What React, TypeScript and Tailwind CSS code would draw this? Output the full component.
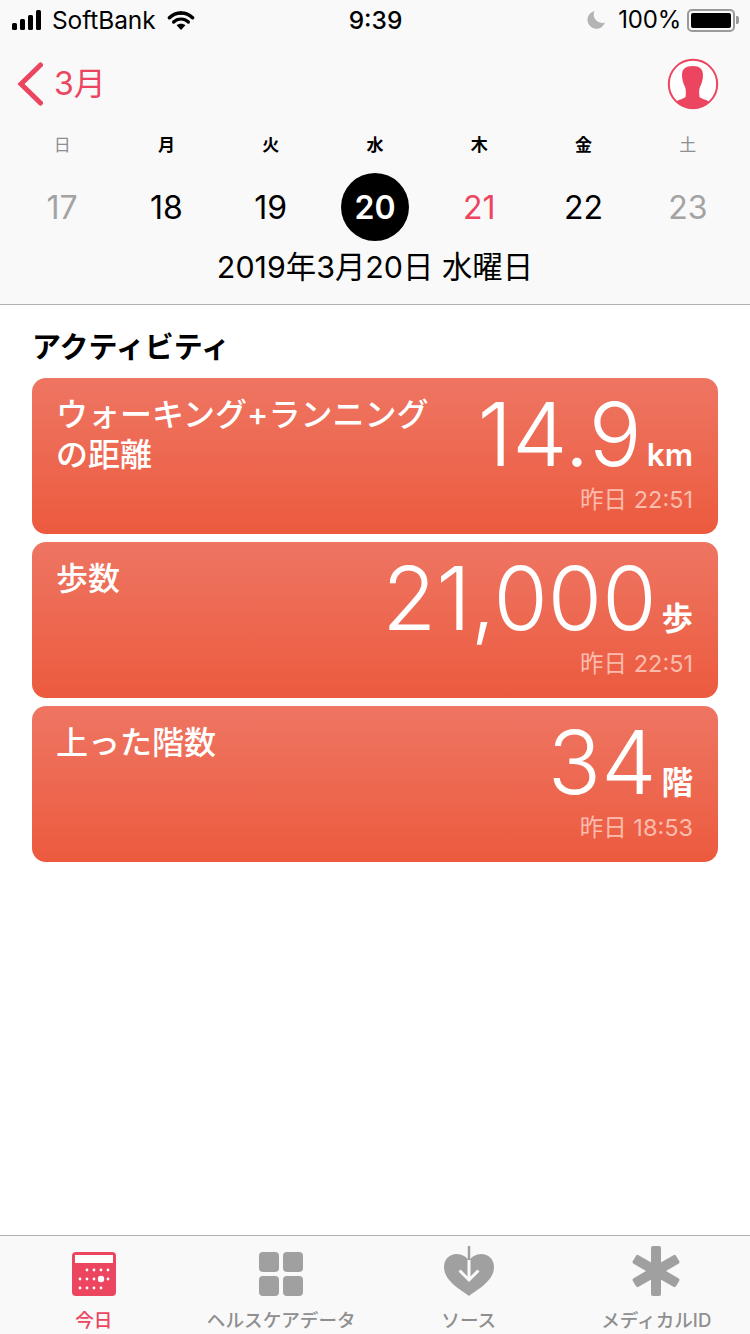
import type { ReactNode } from "react";

const FONT = "font-['Inter','Noto_Sans_CJK_JP',sans-serif]";

const weekdays = [
  { label: "日", tone: "text-[#8e8e93] font-normal" },
  { label: "月", tone: "text-black font-bold" },
  { label: "火", tone: "text-black font-bold" },
  { label: "水", tone: "text-black font-bold" },
  { label: "木", tone: "text-black font-bold" },
  { label: "金", tone: "text-black font-bold" },
  { label: "土", tone: "text-[#8e8e93] font-normal" },
];

const days = [
  { n: "17", tone: "text-[#a3a3a3]" },
  { n: "18", tone: "text-black" },
  { n: "19", tone: "text-black" },
  { n: "20", tone: "text-white font-semibold bg-black" },
  { n: "21", tone: "text-[#ec4560]" },
  { n: "22", tone: "text-black" },
  { n: "23", tone: "text-[#a3a3a3]" },
];

const cards = [
  { title: "ウォーキング+ランニング\nの距離", value: "14.9", unit: "km", time: "昨日 22:51" },
  { title: "歩数", value: "21,000", unit: "歩", time: "昨日 22:51" },
  { title: "上った階数", value: "34", unit: "階", time: "昨日 18:53" },
];

function StatusBar() {
  return (
    <div className="flex h-[40px] items-center justify-between pl-[12px] pr-[11px] leading-none text-black">
      <div className="flex w-[250px] items-center">
        <div className="flex items-end gap-[3px]">
          <span className="h-[7px] w-[5px] rounded-[1.5px] bg-black" />
          <span className="h-[11px] w-[5px] rounded-[1.5px] bg-black" />
          <span className="h-[15px] w-[5px] rounded-[1.5px] bg-black" />
          <span className="h-[20px] w-[5px] rounded-[1.5px] bg-black" />
        </div>
        <span className="ml-[11px] text-[24.500px] tracking-[-0.1px]">SoftBank</span>
        <svg className="ml-[11px]" width="28" height="21" viewBox="0 0 28 21">
          <path d="M14 3c4.8 0 8.6 1.800 11.600 4.700" fill="none" stroke="#000" strokeWidth="3.400" strokeLinecap="round" />
          <path d="M14 3C9.200 3 5.400 4.800 2.400 7.700" fill="none" stroke="#000" strokeWidth="3.400" strokeLinecap="round" />
          <path d="M14 9c2.900 0 5.400 1 7.400 3M14 9c-2.900 0-5.400 1-7.400 3" fill="none" stroke="#000" strokeWidth="3.200" strokeLinecap="round" />
          <path d="M9.600 15.200c2.500-2 6.300-2 8.800 0L14 20z" fill="#000" />
        </svg>
      </div>
      <span className="text-[24.500px] font-medium">9:39</span>
      <div className="flex w-[250px] items-center justify-end">
        <svg width="20" height="20" viewBox="0 0 20 20">
          <path d="M8.500 1A9 9 0 1 0 19 12.500 8.500 8.500 0 0 1 8.500 1z" fill="#b4b4b4" />
        </svg>
        <span className="ml-[12px] text-[24px] tracking-[-0.2px]">100%</span>
        <div className="ml-[6px] flex items-center">
          <div className="flex h-[23px] w-[48px] items-center justify-center rounded-[5px] border-2 border-[#9a9a9a]">
            <div className="h-[15px] w-[40px] rounded-[2px] bg-black" />
          </div>
          <span className="ml-[1px] h-[8px] w-[3px] rounded-r-[2px] bg-[#9a9a9a]" />
        </div>
      </div>
    </div>
  );
}

function Header() {
  return (
    <div className="border-b border-[#b2b2b2] bg-[#f9f9f9]">
      <StatusBar />
      <div className="mt-[12px] flex h-[64px] items-center justify-between pl-[17px] pr-[31px]">
        <div className="flex items-center">
          <svg width="26" height="44" viewBox="0 0 26 44">
            <path d="M23.500 3 L4 22 L23.500 41" fill="none" stroke="#ec4560" strokeWidth="5" strokeLinecap="round" strokeLinejoin="miter" />
          </svg>
          <span className="ml-[11px] text-[32px] leading-none text-[#ec4560]">3月</span>
        </div>
        <svg width="52" height="52" viewBox="0 0 52 52">
          <defs>
            <clipPath id="avatar-clip">
              <circle cx="26" cy="26" r="24" />
            </clipPath>
          </defs>
          <circle cx="26" cy="26" r="24.200" fill="#fff" stroke="#ec4560" strokeWidth="2" />
          <path
            clipPath="url(#avatar-clip)"
            d="M26 8c6.500 0 10 3 10 9 0 5-1.500 9-3 12-1 2-1 7-.5 10 2 2 8 3 10.500 5 1 1 1.500 4 1.500 8H6.500c0-4 .5-7 1.500-8 2.500-2 8.500-3 10.500-5 .5-3 .5-8-.5-10-1.500-3-3-7-3-12 0-6 3.500-9 11-9z"
            fill="#ec4560"
          />
        </svg>
      </div>
      <div className="mt-[17px] grid grid-cols-7 px-[10px] text-center">
        {weekdays.map((d) => (
          <span key={d.label} className={`h-[24px] text-[17px] leading-[24px] ${d.tone}`}>
            {d.label}
          </span>
        ))}
      </div>
      <div className="mt-[16px] grid grid-cols-7 px-[10px]">
        {days.map((d) => (
          <div key={d.n} className="flex justify-center">
            <span className={`flex size-[68px] items-center justify-center rounded-full pt-[2px] text-[32px] leading-none ${d.tone}`}>
              {d.n}
            </span>
          </div>
        ))}
      </div>
      <p className="mt-[7px] h-[56px] text-center text-[30.400px] leading-[38px] text-black">
        2019年3月20日 水曜日
      </p>
    </div>
  );
}

function MetricCard({ title, value, unit, time }: { title: string; value: string; unit: string; time: string }) {
  return (
    <div className="relative h-[156px] rounded-[14px] bg-gradient-to-b from-[#ee7562] to-[#ec5a3e] text-white">
      <p className="absolute left-[24px] top-[17px] whitespace-pre-line text-[32px] font-medium leading-[40px]">{title}</p>
      <div className="absolute right-[25px] top-[12px] flex items-baseline">
        <span className="text-[88px] font-[270] leading-[88px]">{value}</span>
        <span className="ml-[5px] text-[31.500px] font-semibold leading-none">{unit}</span>
      </div>
      <p className="absolute right-[25px] top-[106px] text-[23.500px] leading-[32px] text-[#fbbcae]">{time}</p>
    </div>
  );
}

function TabItem({ icon, label, active }: { icon: ReactNode; label: string; active?: boolean }) {
  return (
    <div className="flex flex-col items-center">
      <div className="flex h-[58px] items-end">{icon}</div>
      <span className={`mt-[10px] whitespace-nowrap text-[18.600px] leading-[28px] font-medium ${active ? "text-[#ec4560]" : "text-[#8f8f8f]"}`}>
        {label}
      </span>
    </div>
  );
}

function TabBar() {
  const dots: [number, number, number][] = [
    [15, 18, 1.4], [22, 18, 1.4], [29, 18, 1.4], [36, 18, 1.4],
    [8, 27, 1.4], [15, 27, 1.4], [22, 27, 1.4], [29, 27, 3.2], [36, 27, 1.4],
    [8, 36, 1.4], [15, 36, 1.4], [22, 36, 1.4], [29, 36, 1.4],
  ];
  return (
    <div className="mt-auto grid h-[99px] grid-cols-4 border-t border-[#b2b2b2] bg-[#f9f9f9] pt-[2px]">
      <TabItem
        active
        label="今日"
        icon={
          <svg width="44" height="44" viewBox="0 0 44 44">
            <rect width="44" height="44" rx="4" fill="#ec4560" />
            <rect x="3" y="3" width="38" height="8" fill="#fff" />
            {dots.map(([cx, cy, r]) => (
              <circle key={`${cx}-${cy}`} cx={cx} cy={cy} r={r} fill="#fff" />
            ))}
          </svg>
        }
      />
      <TabItem
        label="ヘルスケアデータ"
        icon={
          <div className="grid grid-cols-2 gap-[4px]">
            <span className="size-[20px] rounded-[4px] bg-[#a0a0a0]" />
            <span className="size-[20px] rounded-[4px] bg-[#a0a0a0]" />
            <span className="size-[20px] rounded-[4px] bg-[#a0a0a0]" />
            <span className="size-[20px] rounded-[4px] bg-[#a0a0a0]" />
          </div>
        }
      />
      <TabItem
        label="ソース"
        icon={
          <svg width="50" height="50" viewBox="0 0 50 50">
            <path d="M25 50 C16 43 0 35 0 21 C0 13 6 8 12.500 8 C18 8 23 11 25 15 C27 11 32 8 37.500 8 C44 8 50 13 50 21 C50 35 34 43 25 50z" fill="#a0a0a0" />
            <path d="M25 14V33M15.500 24.500 25 34l9.500-9.500" fill="none" stroke="#f9f9f9" strokeWidth="3" />
            <path d="M25 0V14" stroke="#a0a0a0" strokeWidth="2.500" />
          </svg>
        }
      />
      <TabItem
        label="メディカルID"
        icon={
          <svg width="50" height="50" viewBox="0 0 50 50">
            <g fill="#a0a0a0">
              <rect x="20" y="0" width="10" height="50" rx="2" />
              <rect x="20" y="0" width="10" height="50" rx="2" transform="rotate(60 25 25)" />
              <rect x="20" y="0" width="10" height="50" rx="2" transform="rotate(-60 25 25)" />
            </g>
          </svg>
        }
      />
    </div>
  );
}

export default function App() {
  return (
    <div className={`flex h-[1334px] w-[750px] flex-col overflow-hidden bg-white ${FONT}`}>
      <Header />
      <main className="px-[32px]">
        <h2 className="mt-[23px] text-[29px] font-bold leading-[40px] text-black">アクティビティ</h2>
        <div className="mt-[10px] flex flex-col gap-[8px]">
          {cards.map((c) => (
            <MetricCard key={c.value} {...c} />
          ))}
        </div>
      </main>
      <TabBar />
    </div>
  );
}
